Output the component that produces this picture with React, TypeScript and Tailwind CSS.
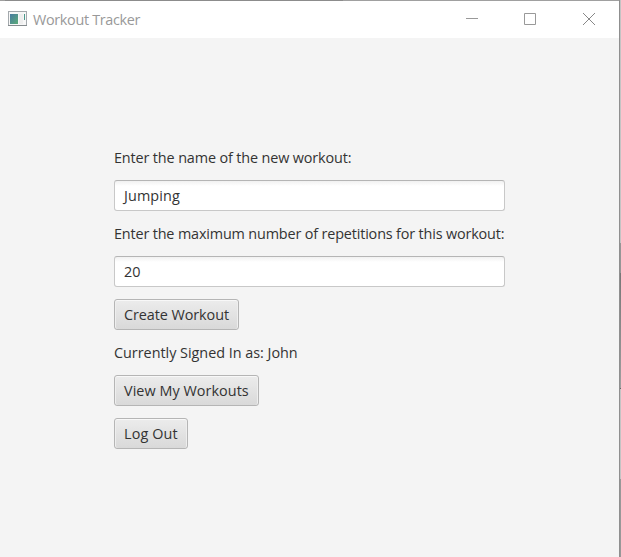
import type { ReactNode } from "react";

function Label({ children, className }: { children: ReactNode; className: string }) {
  return <div className={`h-[21px] whitespace-nowrap leading-[21px] ${className}`}><span>{children}</span></div>;
}

function Field({ value }: { value: string }) {
  return (
    <div className="h-[31px] w-[391px] rounded-[3px] border border-[#c8c8c8] border-t-[#b5b5b5] bg-linear-to-b from-[#f1f1f1] to-white to-[5px] pl-[9px] leading-[30px] tracking-[0.12px]">
      {value}
    </div>
  );
}

function Button({ children, className }: { children: ReactNode; className: string }) {
  return (
    <button className={`block h-[31px] whitespace-nowrap rounded-[3px] border border-[#b5b5b5] bg-linear-to-b from-[#ececec] to-[#d9d9d9] pl-[9px] text-left leading-[30px] shadow-[inset_0_1px_0_#f8f8f8,inset_1px_0_0_#eeeeee,inset_-1px_0_0_#eeeeee] ${className}`}>
      {children}
    </button>
  );
}

function TitleBar() {
  return (
    <header className="flex h-[37px] bg-white text-[#999999]">
      <svg className="ml-2 mt-[10px] shrink-0" width="19" height="16" viewBox="0 0 19 16">
        <defs>
          <linearGradient id="screen" x1="0" y1="0" x2="1" y2="1">
            <stop offset="0" stopColor="#477ba0" />
            <stop offset="1" stopColor="#5bab78" />
          </linearGradient>
        </defs>
        <rect x="0.5" y="0.5" width="18" height="14" fill="#f7f7f7" stroke="#a4a9ad" />
        <path d="M0 14.5H19" stroke="#858b8e" />
        <rect x="2" y="3" width="8" height="10" fill="url(#screen)" />
        <rect x="11" y="3" width="4" height="10" fill="#eeeeee" />
        <path d="M16 3h1v6h-1z" fill="#4b998c" />
      </svg>
      <span className="ml-[6px] mt-[8px] w-[120px] whitespace-nowrap text-[14.4px] leading-[21px] tracking-[-0.32px]">Workout Tracker</span>
      <svg className="ml-auto mr-[22px] mt-[11px]" width="131" height="15" viewBox="0 0 131 15" fill="none" stroke="#999999">
        <path d="M0 6.5H12" />
        <path d="M58.5 1.5H69.5V12.5H58.5Z" />
        <path d="M117 1L129 13M129 1L117 13" stroke="#888888" />
      </svg>
    </header>
  );
}

export default function App() {
  return (
    <div className="flex h-[557px] w-[621px] overflow-hidden bg-[#f4f4f4] font-['Open_Sans','Noto_Sans',sans-serif] text-[14.4px] text-[#333333]">
      <div className="flex w-[619px] flex-col">
        <div className="flex h-px shrink-0">
          <div className="w-[5px] bg-[#a0a0a0]" />
          <div className="w-[338px] bg-[#8c8c8c]" />
          <div className="flex-1 bg-[#a0a0a0]" />
        </div>
        <TitleBar />
        <main className="flex flex-1 flex-col items-start gap-3 pl-[114px] pt-[109px]">
          <Label className="tracking-[-0.13px]">Enter the name of the new workout:</Label>
          <Field value="Jumping" />
          <Label className="tracking-[-0.155px]">Enter the maximum number of repetitions for this workout:</Label>
          <Field value="20" />
          <Button className="w-[125px] tracking-[-0.07px]">Create Workout</Button>
          <Label className="tracking-[-0.02px]">Currently Signed In as: John</Label>
          <Button className="w-[145px] tracking-[0.05px]">View My Workouts</Button>
          <Button className="w-[74px] tracking-[0.12px]">Log Out</Button>
        </main>
      </div>
      <div className="w-px bg-[#8f8f8f]" />
      <div className="flex w-px flex-col">
        <div className="h-[243px] bg-[#c4c4c4]" />
        <div className="h-[30px] bg-[#969696]" />
        <div className="h-[115px] bg-linear-to-b from-[#777777] to-[#a0a0a0]" />
        <div className="h-px bg-[#666666]" />
        <div className="h-[90px] bg-[#c4c4c4]" />
        <div className="flex-1 bg-[#989898]" />
      </div>
    </div>
  );
}
